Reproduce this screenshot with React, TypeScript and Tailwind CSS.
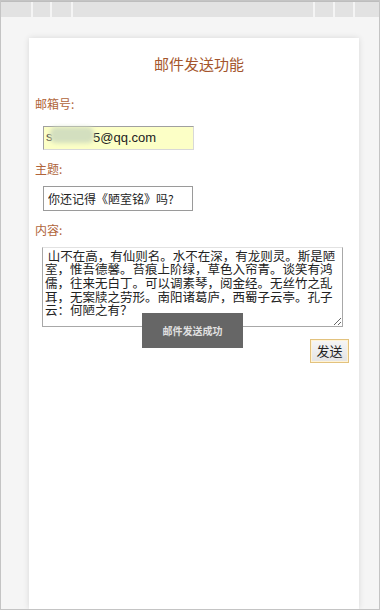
import { useState } from "react";

const poem =
  " 山不在高，有仙则名。水不在深，有龙则灵。斯是陋\n室，惟吾德馨。苔痕上阶绿，草色入帘青。谈笑有鸿\n儒，往来无白丁。可以调素琴，阅金经。无丝竹之乱\n耳，无案牍之劳形。南阳诸葛庐，西蜀子云亭。孔子\n云：何陋之有？";

const font = "font-['Microsoft_YaHei','Noto_Sans_CJK_SC',sans-serif]";

export default function App() {
  const [email, setEmail] = useState("5@qq.com");
  const [subject, setSubject] = useState("你还记得《陋室铭》吗?");
  const [content, setContent] = useState(poem);
  const [sent, setSent] = useState(true);

  return (
    <div className={`relative flex h-[610px] w-[380px] flex-col overflow-hidden border border-[#c4c4c4] bg-[#f5f5f5] ${font}`}>
      {/* top strip */}
      <div className="flex h-[16px] shrink-0 border-t border-[#bdbdbd] bg-[#e2e2e2]">
        <div className="w-[32px] border-r-2 border-[#f4f4f4]" />
        <div className="w-[19px] border-r-2 border-[#f4f4f4]" />
        <div className="w-[21px] border-r-2 border-[#f4f4f4]" />
        <div className="flex-1 border-r-2 border-[#f4f4f4]" />
        <div className="w-[20px] border-r-2 border-[#f4f4f4]" />
        <div className="w-[20px] border-r-2 border-[#f4f4f4]" />
        <div className="w-[24px]" />
      </div>

      <div className="flex flex-1 pl-[28px] pt-[21px]">
        <div className="relative flex w-[330px] flex-col bg-white shadow-[0_0_6px_rgba(0,0,0,0.12)]">
          <h1 className="pl-[10px] pt-[16px] text-center text-[15px] leading-[20px] text-[#a4552c]">邮件发送功能</h1>

          <label className="ml-[6px] mt-[22px] text-[12px] leading-[16px] text-[#b0643a]">邮箱号:</label>
          <div className="relative ml-[14px] mt-[11px] w-[151px]">
            <input
              value={email}
              onChange={(e) => setEmail(e.target.value)}
              className="h-[24px] w-full border border-[#a0a0a0] border-b-[#d8d8d8] border-r-[#d8d8d8] bg-[#fcffc6] pl-[49px] text-[13px] text-[#222] outline-none font-['Liberation_Sans',sans-serif]"
            />
            <span className="absolute left-[3px] top-[4px] text-[13px] text-[#444] font-['Liberation_Sans',sans-serif]">s</span>
            <div className="absolute left-[7px] top-[4px] h-[16px] w-[44px] rounded-[6px] bg-[#d3dfbf] blur-[2px]" />
          </div>

          <label className="ml-[6px] mt-[11px] text-[12px] leading-[16px] text-[#b0643a]">主题:</label>
          <input
            value={subject}
            onChange={(e) => setSubject(e.target.value)}
            className="ml-[14px] mt-[9px] h-[25px] w-[150px] border border-[#9a9a9a] bg-white px-[4px] text-[12px] text-[#222] outline-none"
          />

          <label className="ml-[6px] mt-[11px] text-[12px] leading-[16px] text-[#b0643a]">内容:</label>
          <textarea
            value={content}
            onChange={(e) => setContent(e.target.value)}
            className="ml-[13px] mt-[9px] h-[80px] w-[301px] resize border border-[#a8a8a8] border-t-[#e2e2e2] px-[2px] pt-[1px] text-[12.5px] leading-[13.7px] text-[#222] outline-none"
          />

          <div className="mr-[10px] mt-[12px] flex justify-end">
            <button
              onClick={() => setSent(true)}
              className="h-[24px] w-[39px] border border-[#e2c27e] bg-gradient-to-b from-[#f6f6f6] to-[#e4e4e4] text-[13px] leading-[20px] text-[#222] shadow-[inset_0_0_0_1px_#fff3d6]"
            >
              发送
            </button>
          </div>

          {sent && (
            <div
              onClick={() => setSent(false)}
              className="absolute left-[113px] top-[275px] flex h-[35px] w-[101px] items-center justify-center bg-[#666] text-[10px] font-bold text-[#e0e0e0]"
            >
              邮件发送成功
            </div>
          )}
        </div>
      </div>
    </div>
  );
}
